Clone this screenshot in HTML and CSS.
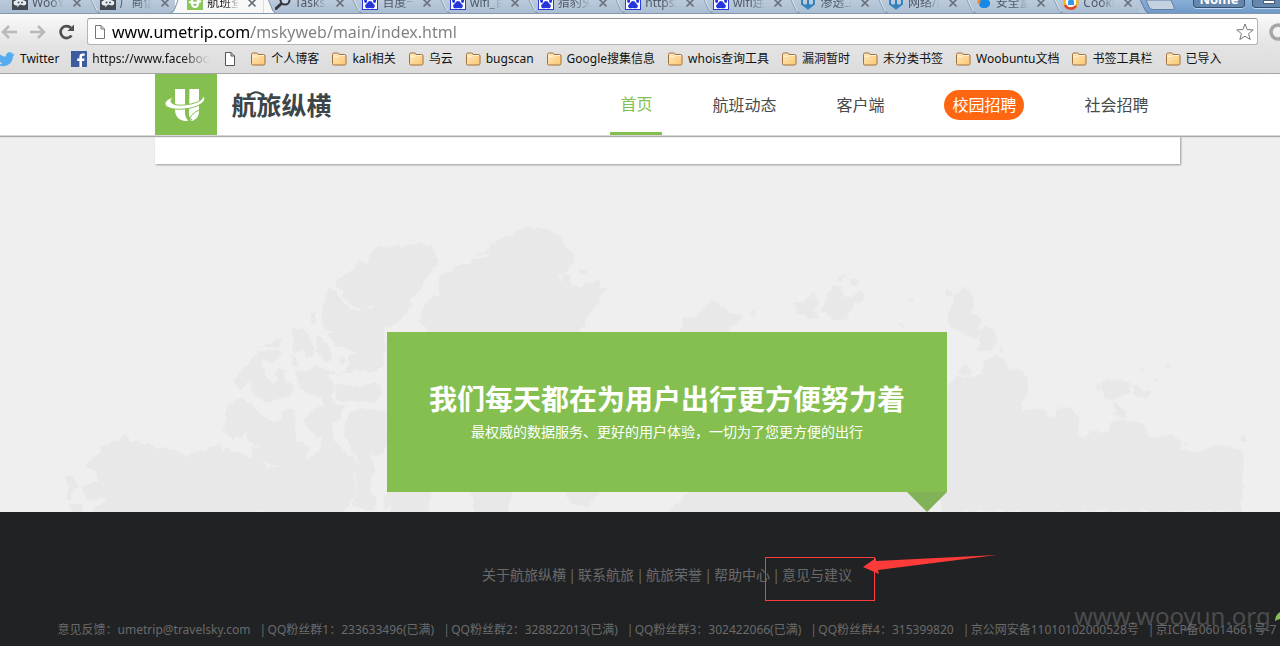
FILE: index.html
```html
<!DOCTYPE html>
<html lang="zh-CN">
<head>
<meta charset="utf-8">
<meta name="viewport" content="width=device-width, initial-scale=1">
<title>航班查询 - 航旅纵横</title>
<link rel="stylesheet" href="styles.css">
</head>
<body>
<svg class="defs" aria-hidden="true">
  <defs>
    <linearGradient id="folder-fill" x1="0" y1="0" x2="1" y2="1">
      <stop offset="0" stop-color="#ffeac0"/><stop offset="1" stop-color="#fbc66f"/>
    </linearGradient>
    <symbol id="i-folder" viewBox="0 0 16 14">
      <path d="M1.500 11.500V2.500Q1.500 1 3 1h3.500Q8 1 8 2.500h5.500Q15 2.500 15 4v7.500Q15 13 13.500 13H2.500Q1.500 13 1.500 11.500z" fill="url(#folder-fill)" stroke="#a0713e"/>
      <path d="M2.500 4.500h4L8 3.500h6" fill="none" stroke="#fff3d8"/>
    </symbol>
    <symbol id="i-paw" viewBox="0 0 16 16">
      <rect x=".5" y=".5" width="15" height="15" fill="#fff" stroke="#2b3bd6"/>
      <g fill="#2736dc"><ellipse cx="3.600" cy="7" rx="1.500" ry="2"/><ellipse cx="6.300" cy="4" rx="1.500" ry="2"/><ellipse cx="9.900" cy="4" rx="1.500" ry="2"/><ellipse cx="12.600" cy="7" rx="1.500" ry="2"/><path d="M8 7c2 0 2.500 2 4 3.300 1.600 1.500.8 4-1.200 4-1 0-1.800-.4-2.800-.4s-1.800.4-2.800.4c-2 0-2.800-2.500-1.200-4C5.500 9 6 7 8 7z"/></g>
    </symbol>
    <symbol id="i-cloud" viewBox="0 0 16 16">
      <rect width="16" height="16" fill="#434a54"/>
      <path d="M4 11.500a2.500 2.500 0 0 1 0-5 4 4 0 0 1 7.500 0 2.500 2.500 0 0 1 .5 5l-4-1-3 3 .5-2z" fill="#e8edf2"/><circle cx="6.500" cy="8.500" r="1" fill="#434a54"/><circle cx="10" cy="8.500" r="1" fill="#434a54"/>
    </symbol>
    <symbol id="i-ume" viewBox="0 0 16 16">
      <rect width="16" height="16" fill="#8ac65b"/>
      <path d="M5 3v6q0 4 3 4t3-4V3M2 8q6 2 12-1" fill="none" stroke="#fff" stroke-width="2.200"/>
    </symbol>
    <symbol id="i-search" viewBox="0 0 16 16">
      <path d="M1 14.500 7 9" stroke="#34383e" stroke-width="3" stroke-linecap="round"/><circle cx="10" cy="6" r="4.500" fill="#cbd8e5" stroke="#34383e" stroke-width="2"/>
    </symbol>
    <symbol id="i-anchor" viewBox="0 0 16 16">
      <path d="M2 3v7l6 4.500 6-4.500V3M8 3v10M5.500 10.500 8 13.500l2.500-3" fill="none" stroke="#3182bd" stroke-width="2"/>
    </symbol>
    <symbol id="i-drop" viewBox="0 0 16 16">
      <path d="M3 9c0-4 5-7 8-5l3 4c1 4-3 6.500-6 6C4.500 14 3 12 3 9z" fill="#1688e8"/><path d="M1.500 9.500c-1-5 4-8 8-7-4 .5-5.500 3-5.500 8z" fill="#f28a2e"/>
    </symbol>
    <symbol id="i-ring" viewBox="0 0 16 16">
      <circle cx="8" cy="8" r="6.500" fill="#fff" stroke="#f2b322" stroke-width="2.500"/><path d="M2 11a6.500 6.500 0 0 0 11 1" fill="none" stroke="#e0452f" stroke-width="2.500"/><path d="M5 11V7l3-3 3 3v4z" fill="#3396e6"/>
    </symbol>
    <symbol id="i-close" viewBox="0 0 10 10"><path d="m1.500 1.500 7 7m0-7-7 7" stroke="#68717d" stroke-width="1.700"/></symbol>
    <symbol id="i-edge" viewBox="0 0 11 13"><path d="M2.500 0 8 11q1 1.500 3 1.500" fill="none" stroke="#8093a9"/><path d="M3.500 0 9 11" fill="none" stroke="#dce6f0"/></symbol>
    <symbol id="i-page" viewBox="0 0 12 14"><path d="M1.500.5H7l3.500 3.500v9.500h-9zM7 .5V4h3.500" fill="#fff" stroke="currentColor"/></symbol>
  </defs>
</svg>

<div class="browser">
  <div class="tabstrip">
    <div class="tabs">
      <div class="tab"><svg class="edge"></svg><svg class="fav"><use href="#i-cloud"/></svg><span class="tab-title">WooYun</span><button class="close" aria-label="关闭"><svg><use href="#i-close"/></svg></button></div>
      <div class="tab"><svg class="edge"><use href="#i-edge"/></svg><svg class="fav"><use href="#i-cloud"/></svg><span class="tab-title">厂商信息</span><button class="close" aria-label="关闭"><svg><use href="#i-close"/></svg></button></div>
      <div class="tab active"><svg class="edge" viewBox="0 0 11 13"><path d="M11 0H3L-1 10q-1 3-4 3h16z" fill="#f8f8f8"/><path d="M2.500 0-1 9.500Q-2 12.500-5 12.500" fill="none" stroke="#8093a9"/></svg><svg class="fav"><use href="#i-ume"/></svg><span class="tab-title">航班查询</span><button class="close" aria-label="关闭"><svg><use href="#i-close"/></svg></button></div>
      <div class="tab"><svg class="edge" viewBox="0 0 11 13"><path d="M0 0h5l4 10q1 3 3 3H0z" fill="#f8f8f8"/><path d="M5 0 9 10q1 2.500 3 2.500" fill="none" stroke="#8093a9"/></svg><svg class="fav"><use href="#i-search"/></svg><span class="tab-title">Tasks</span><button class="close" aria-label="关闭"><svg><use href="#i-close"/></svg></button></div>
      <div class="tab"><svg class="edge"><use href="#i-edge"/></svg><svg class="fav"><use href="#i-paw"/></svg><span class="tab-title">百度一下</span><button class="close" aria-label="关闭"><svg><use href="#i-close"/></svg></button></div>
      <div class="tab"><svg class="edge"><use href="#i-edge"/></svg><svg class="fav"><use href="#i-paw"/></svg><span class="tab-title">wifi_百度</span><button class="close" aria-label="关闭"><svg><use href="#i-close"/></svg></button></div>
      <div class="tab"><svg class="edge"><use href="#i-edge"/></svg><svg class="fav"><use href="#i-paw"/></svg><span class="tab-title">猎豹免费</span><button class="close" aria-label="关闭"><svg><use href="#i-close"/></svg></button></div>
      <div class="tab"><svg class="edge"><use href="#i-edge"/></svg><svg class="fav"><use href="#i-paw"/></svg><span class="tab-title">https://</span><button class="close" aria-label="关闭"><svg><use href="#i-close"/></svg></button></div>
      <div class="tab"><svg class="edge"><use href="#i-edge"/></svg><svg class="fav"><use href="#i-paw"/></svg><span class="tab-title">wifi连接</span><button class="close" aria-label="关闭"><svg><use href="#i-close"/></svg></button></div>
      <div class="tab"><svg class="edge"><use href="#i-edge"/></svg><svg class="fav"><use href="#i-anchor"/></svg><span class="tab-title">渗透工具</span><button class="close" aria-label="关闭"><svg><use href="#i-close"/></svg></button></div>
      <div class="tab"><svg class="edge"><use href="#i-edge"/></svg><svg class="fav"><use href="#i-anchor"/></svg><span class="tab-title">网络/服务</span><button class="close" aria-label="关闭"><svg><use href="#i-close"/></svg></button></div>
      <div class="tab"><svg class="edge"><use href="#i-edge"/></svg><svg class="fav"><use href="#i-drop"/></svg><span class="tab-title">安全盒子</span><button class="close" aria-label="关闭"><svg><use href="#i-close"/></svg></button></div>
      <div class="tab"><svg class="edge"><use href="#i-edge"/></svg><svg class="fav"><use href="#i-ring"/></svg><span class="tab-title">Cookie</span><button class="close" aria-label="关闭"><svg><use href="#i-close"/></svg></button></div>
    </div>
    <div class="window-tools">
      <svg class="newtab" viewBox="0 0 38 13"><path d="M0 0h1l5 10q1 3 4 3H0z" fill="#b4c6da"/><path d="M1.500 0 6 10q1 2.500 4 2.500" fill="none" stroke="#5f7c9f"/><path d="M7 0l3 7q1 2.500 4 2.500h20q2 0 1-2.500L32 0z" fill="#c3d1e0" stroke="#647f9f"/></svg>
      <button class="win-btn profile">Nome</button>
      <button class="win-btn minimize" aria-label="最小化"><svg viewBox="0 0 12 4"><rect x=".5" y=".5" width="11" height="3" fill="#fff" stroke="#48607c"/></svg></button>
    </div>
  </div>

  <div class="toolbar">
    <button class="tool" aria-label="后退"><svg viewBox="0 0 18 18"><path d="M17 9H3M9 3 3 9l6 6" fill="none" stroke="#b9b9b9" stroke-width="2.500"/></svg></button>
    <button class="tool" aria-label="前进"><svg viewBox="0 0 18 18"><path d="M1 9h14M9 3l6 6-6 6" fill="none" stroke="#b9b9b9" stroke-width="2.500"/></svg></button>
    <button class="tool" aria-label="刷新"><svg viewBox="0 0 18 18"><path d="M13.500 12.500A6 6 0 1 1 13 5" fill="none" stroke="#505050" stroke-width="2.700"/><path d="M16 1.500V8H9.500z" fill="#505050"/></svg></button>
    <div class="omnibox">
      <svg class="page-icon"><use href="#i-page"/></svg>
      <input class="url" type="text" aria-label="地址" value="www.umetrip.com/mskyweb/main/index.html">
      <button class="star" aria-label="收藏"><svg viewBox="0 0 18 18"><path d="m9 1 2.200 5.600 6 .3-4.700 3.800 1.700 5.800L9 13.200l-5.200 3.300 1.700-5.800L.8 6.900l6-.3z" fill="#fff" stroke="#777"/></svg></button>
    </div>
    <svg class="ext" viewBox="0 0 18 18"><circle cx="9" cy="9" r="7" fill="#f1f1f1" stroke="#a6a6a6" stroke-width="3.500"/></svg>
  </div>

  <nav class="bookmarks" aria-label="书签">
    <a class="bm twitter" href="#"><svg class="bm-twitter" viewBox="0 0 18 16"><path d="M17.500 2.200c-.6.4-1.300.5-2 .6A3.600 3.600 0 0 0 9 5.600C5.800 5.500 3 4 1.300 1.700.2 3.500.8 5.500 2.400 6.500l-1.600-.4c0 1.700 1.200 3.100 2.900 3.500l-1.600.1c.5 1.400 1.800 2.300 3.300 2.400A7 7 0 0 1 0 13.600C8 18 16 13 15.900 5.400c.7-.5 1.400-1.100 1.800-1.900l-2 .5c.8-.4 1.400-1 1.800-1.800z" fill="#55acee"/></svg>Twitter</a>
    <a class="bm" href="#"><svg class="fav" viewBox="0 0 16 16"><rect width="16" height="16" fill="#3e5b9e"/><path d="M11 16v-6h2.200l.4-2.500H11V6q0-1.200 1.200-1.200h1.500V2.500h-2Q8.400 2.500 8.400 5.500v2H6.200V10h2.200v6z" fill="#fff"/></svg><span class="fade">https://www.facebook.com</span></a>
    <a class="bm" href="#" aria-label="无标题"><svg class="page-icon"><use href="#i-page"/></svg></a>
    <a class="bm" href="#"><svg class="folder"><use href="#i-folder"/></svg>个人博客</a>
    <a class="bm" href="#"><svg class="folder"><use href="#i-folder"/></svg>kali相关</a>
    <a class="bm" href="#"><svg class="folder"><use href="#i-folder"/></svg>乌云</a>
    <a class="bm" href="#"><svg class="folder"><use href="#i-folder"/></svg>bugscan</a>
    <a class="bm" href="#"><svg class="folder"><use href="#i-folder"/></svg>Google搜集信息</a>
    <a class="bm" href="#"><svg class="folder"><use href="#i-folder"/></svg>whois查询工具</a>
    <a class="bm" href="#"><svg class="folder"><use href="#i-folder"/></svg>漏洞暂时</a>
    <a class="bm" href="#"><svg class="folder"><use href="#i-folder"/></svg>未分类书签</a>
    <a class="bm" href="#"><svg class="folder"><use href="#i-folder"/></svg>Woobuntu文档</a>
    <a class="bm" href="#"><svg class="folder"><use href="#i-folder"/></svg>书签工具栏</a>
    <a class="bm" href="#"><svg class="folder"><use href="#i-folder"/></svg>已导入</a>
  </nav>
</div>

<div class="site">
  <header class="site-header">
    <div class="wrap header-row">
      <a class="logo" href="#" aria-label="航旅纵横"><svg viewBox="0 0 62 61">
        <path d="M20 15h10v24q0 5 4 8-14 1-14-12zM34.500 15H44v22c0 5-2 8-7 10q-3-2-3-6z" fill="#fff"/>
        <path d="M33 47q4-8 11-11M31 39l6 7" stroke="#84bf50" fill="none"/>
        <path d="M19 23C4 27 8 37 29 35c15-1 25-9 19-13 0 5-9 8-19 9-11 1-17-3-10-8z" fill="#fff" stroke="#84bf50" stroke-width="1"/>
      </svg></a>
      <a class="wordmark" href="#"><svg viewBox="0 0 18 6"><path d="M1 6Q8-3 17 5" fill="none" stroke="#3c4548" stroke-width="2"/></svg>航旅纵横</a>
      <nav class="main-nav" aria-label="主导航">
        <a class="current" href="#">首页</a>
        <a href="#">航班动态</a>
        <a href="#">客户端</a>
        <a class="pill" href="#">校园招聘</a>
        <a href="#">社会招聘</a>
      </nav>
    </div>
  </header>

  <main class="hero">
    <svg class="map" viewBox="0 137 1334 375" aria-hidden="true">
      <defs><filter id="coast" x="-5%" y="-5%" width="110%" height="110%" color-interpolation-filters="sRGB"><feTurbulence type="fractalNoise" baseFrequency=".13" numOctaves="2" seed="4"/><feDisplacementMap in="SourceGraphic" scale="7" xChannelSelector="R" yChannelSelector="G"/></filter></defs>
      <g filter="url(#coast)" fill="#e8e8e8">
        <g transform="translate(60 220) scale(.3333)">
          <path d="M98 880l4-18 28-10 8-6-8-10-46 4-12-18-6-16 24-16 28-10 8 14 4-2-22-22-4-14-20-16-2-14 30-12 12-32 22-6 8-14 22-2 14-12 22 14 24-2 4 16 22-6 36 16 18-2 36 14 16 2 12 18 16-20 18 0 26-12 24-4 6-12 10 4 10 20 10-12 12 16 18-8 40 22 40 6 2 24 12 6 36-16-32 6-16-20-34-6-4-30 50-4-46-2-14-20-8-16 8-28-10 28-32 20-34-30 10-30 4-50 32-14 44 12 20 32 40 24 30-4 2-24 36-8 2 92 36 20-4 38 42-28 0-40 8-90 38-8 28 4-16 44-24 10 2 30 28 50 36 20 12 30-16 18 8 52-12 40-26 30z"/>
          <path d="M856 600l14-28 35-8 15 8 61-2v120l-21 10-12 12-10-12 6 60-20 40 26 40-10 30-60-10 8-60-8-60 14-12-10-28-30-50z"/>
          <path d="M970 840l16-30v54h-16zM22 768h14l24 34-26 16v22H22zM30 850l36 6-4 16H34z"/>
          <path d="M1060 72l-70 8-42 6-20 18-6 30-22-12-12 14-6 16-32 12-20 20-2 14 16 10 6 28 30 24 30 6 30-8 20-18-20 22-56 8-34-20-20-38-24-10-10 38-10 22-2 38 16 34 20-2-14 14 20 34 44 12 20 2-24 16 6 30-40 20-32-10-28-14-20 8 6 34 20-4 10 80 26 10 10-80-20-16 80-20 42 10 40-14 8-40v-80l19-6 46-32 14-44 50-70 34-50-24-46z"/>
          <path d="M828 490l60 10 60-12 16 12-4 38-70 10-66-10zM704 454l76-8 6 84-36-2-28-24zM726 600l50-42 12 4 2 84-20 8-34-36zM698 322l30 4 30 30 4 50-20 6-14-16-28-4 2-36-10-16zM770 352l20 4 20 30 10 34-30 4-22-38zM748 280l18-2 2 32h-10zM610 382l38-28 14 10v18zM600 394l60-6-2 24-26 18-26-14-4 20 18 20-18 18-36 10-28 26-18-20 18-36zM570 480l34-20 40 30 10-44 14-2 8 40 24 12-4 30-76 22-44-30zM688 402l14 6 16 32-16-4zM836 410l14-4 8 18-12 14-10-8z"/>
        </g>
        <g transform="translate(380 220) scale(.3333)">
          <path d="M180 170l60-38 38 6 0-20 38-2 14-8-24-6v-10h24v-16l50-26 50-26 50-6 60 28 10 28 34 30-2 24-26 26-24 8 8 28 8-28h24l2 40 8-8 20 10 18-18 34-2 22 26-26 42-20 20-14 40-18 24-2 30H120l20-20v-24l-22-14 4-30 18-28 18-22 20 4zM290 96h12v8h-12zM598 150h20v12h-12z"/>
          <path d="M904 296l40-6 36-30 20-24 14 14 46 34 20-4 8 16-40 30 4 14H904z"/>
        </g>
        <g transform="translate(660 220) scale(.3333)">
          <path d="M404 254l34-18 24-22 12 34-12 20 10 24-24 6-36-20zM474 274l26-18-4-28 22-26 26-4 6 30 36-4 10-12 16 4-2 26-30 14-18 44-50 0-12-24zM536 168h18l-4 14h-14zM574 180l24-2-10 16h-14zM742 228h16v14h-14zM716 306l20 10-6 10-14-8zM272 276l18-4-4 16-14-2zM856 212l18-2 6 16-20 4z"/>
        </g>
        <g transform="translate(940 270) scale(.3333)">
          <path d="M30 122l14-50 24-16 18 2 16 44-6 28 26 10v58l-20 10-40-20-38-28zM112 244l8-60 18-14 20 6 16 42-18 20zM180 228l16 10-2 8-14-4zM56 300l20-20 10 12 16 10-10 14-36-4zM20 345l40-25 40 0 26-12 4-32 34-20 30 14 10 30 36-4 20 24 2 50-16 30 4 22 50-4 34 24h14v-30l40 0 26 26 2 56 16 14 18-30 12 10 44-4 6-26 24-12 70 14 36 46 50-10 32 16v26l60 4 30-14 60 0 34 16v130l-8 24 8 26H0V345z"/>
          <path d="M486 340l22-16 64 14-2 32-30 14-38 4-16-20zM580 348l52 20-16 18-34-12zM472 338h10v22h-10zM516 400h16l24 22v20l-40-10 10-12zM602 300h16v8h-16zM682 288h8v8h-8zM644 324h8v8h-8zM902 506l14-14v26h-14zM724 512l24 10-16 2z"/>
        </g>
        <path d="M387 490h45l-5 30h-35zM470 490h42l-5 30h-30zM565 490h37l-15 16-16-2zM690 490h240v30H660z"/>
      </g>
    </svg>
    <div class="wrap card"></div>
    <section class="banner">
      <h1>我们每天都在为用户出行更方便努力着</h1>
      <p>最权威的数据服务、更好的用户体验，一切为了您更方便的出行</p>
    </section>
  </main>

  <footer class="site-footer">
    <nav class="foot-links" aria-label="页脚">
      <a href="#">关于航旅纵横</a><span>|</span><a href="#">联系航旅</a><span>|</span><a href="#">航旅荣誉</a><span>|</span><a href="#">帮助中心</a><span>|</span><a href="#">意见与建议</a>
    </nav>
    <ul class="contacts">
      <li>意见反馈：umetrip@travelsky.com</li>
      <li>QQ粉丝群1：233633496(已满)</li>
      <li>QQ粉丝群2：328822013(已满)</li>
      <li>QQ粉丝群3：302422066(已满)</li>
      <li>QQ粉丝群4：315399820</li>
      <li>京公网安备11010102000528号</li>
      <li>京ICP备06014661号-7</li>
    </ul>
    <svg class="marker" viewBox="0 0 234 50" aria-hidden="true"><rect x=".5" y="4.500" width="109" height="43" fill="none" stroke="#fe3b38"/><path d="M232 2 111 8V5L98 14l16 7-1-4z" fill="#fe3b38"/></svg>
    <div class="watermark">www.wooyun.org<svg viewBox="0 0 14 14"><path d="M0 12Q0 3 12 0v12q-6-4-12 0z" fill="#84bf50"/></svg></div>
  </footer>
</div>
</body>
</html>
```
FILE: styles.css
```css
* { box-sizing: border-box; }

body {
  margin: 0;
  overflow-x: hidden;
  background: #212224;
  font-family: "Noto Sans", "Noto Sans CJK SC", sans-serif;
  font-size: 12px;
}

a { color: inherit; text-decoration: none; }
svg { display: block; flex: none; }
button { margin: 0; padding: 0; border: 0; background: none; font: inherit; }

.defs { position: absolute; width: 0; height: 0; }
.fav { width: 16px; height: 16px; }
.page-icon { width: 12px; height: 14px; color: #777; }
.folder { width: 16px; height: 14px; }

/* Browser chrome */
.tabstrip {
  display: flex;
  height: 13px;
  overflow: hidden;
  background: linear-gradient(#88aed6, #6f9bc9);
}
.tabs { display: flex; flex: 1; background: linear-gradient(#bccbdc, #aabdd2); }
.tab { display: flex; flex: 1 1 0; align-items: flex-end; min-width: 0; height: 13px; color: #4d5968; }
.edge { width: 12px; height: 13px; overflow: visible; }
.tab .fav { margin: 0 4px 3px 0; }
.tab-title {
  width: 32px;
  overflow: hidden;
  line-height: 16px;
  padding-bottom: 2px;
  white-space: nowrap;
  -webkit-mask-image: linear-gradient(90deg, #000 18px, transparent);
  mask-image: linear-gradient(90deg, #000 18px, transparent);
}
.tab.active { background: #f8f8f8; color: #111; }
.close { margin: 0 0 5px 8px; }
.close svg { width: 10px; height: 10px; }

.window-tools { display: flex; flex: none; width: 141px; align-items: flex-start; }
.newtab { width: 38px; height: 13px; margin-right: 16px; }
.win-btn {
  flex: none;
  height: 8px;
  border: 1px solid #34506f;
  border-top: 0;
  border-radius: 0 0 4px 4px;
  box-shadow: 0 1px 0 #bcd4ec;
  background: #6587ad;
}
.profile {
  display: flex;
  align-items: flex-end;
  justify-content: center;
  width: 52px;
  margin-right: 7px;
  color: #fff;
  font-size: 13px;
  font-weight: 700;
  line-height: 16px;
}
.minimize { display: flex; justify-content: center; width: 34px; }
.minimize svg { width: 12px; height: 4px; }

.toolbar {
  display: flex;
  align-items: center;
  gap: 11px;
  height: 32px;
  padding-top: 4px;
  border-top: 1px solid #8496ab;
  background: linear-gradient(#fafafa, #e4e4e4);
  overflow: hidden;
}
.tool svg { width: 18px; height: 18px; }
.omnibox {
  display: flex;
  flex: 1;
  align-items: center;
  height: 27px;
  padding: 0 3px 0 6px;
  border: 1px solid #b4b4b4;
  border-top-color: #959595;
  border-radius: 3px;
  background: #fff;
}
.omnibox .page-icon { margin-right: 6px; width: 12px; height: 14px; }
.url {
  flex: 1;
  min-width: 0;
  height: 24px;
  padding: 0;
  border: 0;
  outline: 0;
  background: linear-gradient(90deg, #000 139px, #7f7f7f 139px);
  -webkit-background-clip: text;
  background-clip: text;
  color: transparent;
  font: 16px/24px "Noto Sans", "Noto Sans CJK SC", sans-serif;
}
.star svg { width: 18px; height: 18px; }
.ext { width: 18px; height: 18px; margin-right: -7px; }

.bookmarks {
  display: flex;
  align-items: center;
  gap: 12px;
  height: 29px;
  border-bottom: 1px solid #a5a5a5;
  background: linear-gradient(#e4e4e4, #dcdcdc);
  color: #111;
  white-space: nowrap;
  overflow: hidden;
}
.bm { display: flex; flex: none; align-items: center; gap: 5px; line-height: 18px; }
.bm .page-icon { margin: 0 2px 0 3px; color: #555; }
.bm.twitter { margin-left: -3px; }
.bm-twitter { width: 18px; height: 16px; }
.fade {
  width: 117px;
  overflow: hidden;
  -webkit-mask-image: linear-gradient(90deg, #000 90px, transparent);
  mask-image: linear-gradient(90deg, #000 90px, transparent);
}

/* Site */
.site { min-width: 1334px; background: #efefef; }
.wrap { width: 1025px; margin: 0 auto; }

.site-header {
  position: relative;
  z-index: 1;
  height: 62px;
  border-bottom: 1px solid #d6d6d6;
  background: #fff;
  box-shadow: 0 1px 1px #aaa;
}
.header-row { display: flex; height: 61px; }
.logo { width: 62px; background: #84bf50; }
.logo svg { width: 62px; height: 61px; }
.wordmark {
  position: relative;
  margin-left: 15px;
  color: #3c4548;
  font-size: 25px;
  font-weight: 700;
  line-height: 62px;
}
.wordmark svg { position: absolute; left: 15px; top: 17px; width: 18px; height: 6px; }
.main-nav {
  display: flex;
  flex: 1;
  align-items: center;
  justify-content: flex-end;
  gap: 60px;
  padding-right: 31px;
  color: #4a4a4a;
  font-size: 16px;
  line-height: 30px;
}
.main-nav .current {
  align-self: stretch;
  margin: 0 -10px;
  padding: 0 10px;
  border-bottom: 3px solid #84bf50;
  color: #84bf50;
  line-height: 61px;
}
.main-nav .pill { padding: 0 8px; border-radius: 15px; background: #ff6612; color: #fff; }

.hero { position: relative; padding-bottom: 20px; }
.map { position: absolute; left: 0; bottom: 0; width: 100%; }
.card { position: relative; height: 28px; background: #fff; box-shadow: 1px 1px 2px #999; }
.banner {
  position: relative;
  width: 560px;
  margin: 168px auto 0;
  padding: 46px 0 49px;
  background: #84bf50;
  color: #fff;
  text-align: center;
}
.banner::after {
  content: "";
  position: absolute;
  right: 0;
  top: 100%;
  border: 20px solid transparent;
  border-top-color: #82b258;
  border-bottom: 0;
}
.banner h1 { margin: 0; font-size: 28px; font-weight: 700; line-height: 42px; }
.banner p { margin: 0; font-size: 14px; line-height: 23px; }

.site-footer {
  position: relative;
  padding: 52px 0 7px;
  background: #212224;
  color: #6a6a6a;
}
.foot-links { display: flex; justify-content: center; font-size: 14px; line-height: 22px; }
.foot-links span { width: 12px; text-align: center; }
.contacts {
  display: flex;
  justify-content: center;
  margin: 34px 0 0;
  padding: 0;
  list-style: none;
  line-height: 19px;
  white-space: nowrap;
}
.contacts li + li::before {
  content: "|";
  box-sizing: border-box;
  display: inline-block;
  width: 17px;
  padding-left: 9px;
}
.marker { position: absolute; left: 765px; top: 41px; width: 234px; height: 50px; }
.watermark {
  position: absolute;
  left: 1074px;
  bottom: 14px;
  display: flex;
  align-items: center;
  gap: 4px;
  color: rgba(120, 120, 120, .5);
  font-size: 24px;
  line-height: 32px;
}
.watermark svg { width: 14px; height: 14px; }
```
